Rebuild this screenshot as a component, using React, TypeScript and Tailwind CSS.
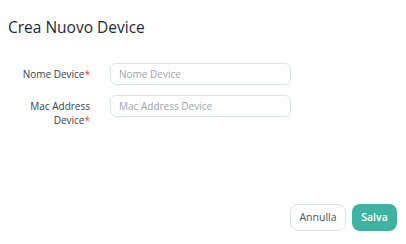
export default function App() {
	return (
		<div className="w-[406px] h-[244px] bg-white flex flex-col font-['Open_Sans',sans-serif]">
			<div className="pl-2 pt-[16px] text-[15.5px] leading-[22px] font-medium text-[#1f2937]">Crea Nuovo Device</div>
			<div className="flex flex-col gap-[10px] mt-[25px]">
				<div className="flex items-start">
					<label className="w-[92px] pr-[2px] text-right text-[10px] leading-[14px] text-[#374151] pt-[4px]">
						Nome Device<span className="text-[#ef4444]">*</span>
					</label>
					<input
						className="ml-[18px] w-[181px] h-[22px] rounded-[6px] border border-[#dbe2ea] px-[8px] text-[10px] outline-none placeholder:text-[#9ca3af]"
						placeholder="Nome Device"
					/>
				</div>
				<div className="flex items-start">
					<label className="w-[92px] pr-[2px] text-right text-[10px] leading-[14px] text-[#374151] pt-[4px]">
						<span className="block">Mac Address</span>
						<span className="block">Device<span className="text-[#ef4444]">*</span></span>
					</label>
					<input
						className="ml-[18px] w-[181px] h-[22px] rounded-[6px] border border-[#dbe2ea] px-[8px] text-[10px] outline-none placeholder:text-[#9ca3af]"
						placeholder="Mac Address Device"
					/>
				</div>
			</div>
			<div className="mt-auto flex justify-end gap-[6px] pr-[9px] pb-[13px]">
				<button className="w-[56px] h-[27px] rounded-[8px] border border-[#dbe2ea] bg-white text-[10.5px] text-[#4b5563]">Annulla</button>
				<button className="w-[45px] h-[27px] rounded-[8px] bg-[#3fb2a1] text-[10.5px] font-semibold text-white">Salva</button>
			</div>
		</div>
	)
}
